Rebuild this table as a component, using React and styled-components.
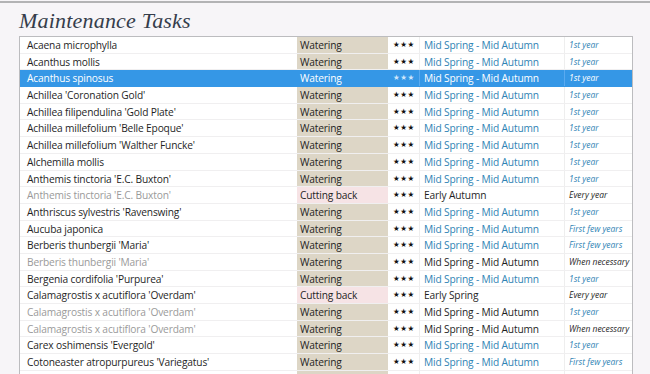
import styled, { createGlobalStyle } from "styled-components";

const GlobalStyle = createGlobalStyle`
  html, body {
    margin: 0;
    padding: 0;
    background: #f7f5f8;
    overflow: hidden;
  }
`;

const rows = [
  { name: "Acaena microphylla", task: "Watering", season: "Mid Spring - Mid Autumn", freq: "1st year", blue: true },
  { name: "Acanthus mollis", task: "Watering", season: "Mid Spring - Mid Autumn", freq: "1st year", blue: true },
  { name: "Acanthus spinosus", task: "Watering", season: "Mid Spring - Mid Autumn", freq: "1st year", blue: true, selected: true },
  { name: "Achillea 'Coronation Gold'", task: "Watering", season: "Mid Spring - Mid Autumn", freq: "1st year", blue: true },
  { name: "Achillea filipendulina 'Gold Plate'", task: "Watering", season: "Mid Spring - Mid Autumn", freq: "1st year", blue: true },
  { name: "Achillea millefolium 'Belle Epoque'", task: "Watering", season: "Mid Spring - Mid Autumn", freq: "1st year", blue: true },
  { name: "Achillea millefolium 'Walther Funcke'", task: "Watering", season: "Mid Spring - Mid Autumn", freq: "1st year", blue: true },
  { name: "Alchemilla mollis", task: "Watering", season: "Mid Spring - Mid Autumn", freq: "1st year", blue: true },
  { name: "Anthemis tinctoria 'E.C. Buxton'", task: "Watering", season: "Mid Spring - Mid Autumn", freq: "1st year", blue: true },
  { name: "Anthemis tinctoria 'E.C. Buxton'", task: "Cutting back", season: "Early Autumn", freq: "Every year", muted: true },
  { name: "Anthriscus sylvestris 'Ravenswing'", task: "Watering", season: "Mid Spring - Mid Autumn", freq: "1st year", blue: true },
  { name: "Aucuba japonica", task: "Watering", season: "Mid Spring - Mid Autumn", freq: "First few years", blue: true },
  { name: "Berberis thunbergii 'Maria'", task: "Watering", season: "Mid Spring - Mid Autumn", freq: "First few years", blue: true },
  { name: "Berberis thunbergii 'Maria'", task: "Watering", season: "Mid Spring - Mid Autumn", freq: "When necessary", muted: true },
  { name: "Bergenia cordifolia 'Purpurea'", task: "Watering", season: "Mid Spring - Mid Autumn", freq: "1st year", blue: true },
  { name: "Calamagrostis x acutiflora 'Overdam'", task: "Cutting back", season: "Early Spring", freq: "Every year" },
  { name: "Calamagrostis x acutiflora 'Overdam'", task: "Watering", season: "Mid Spring - Mid Autumn", freq: "1st year", blue: true, muted: true },
  { name: "Calamagrostis x acutiflora 'Overdam'", task: "Watering", season: "Mid Spring - Mid Autumn", freq: "When necessary", muted: true },
  { name: "Carex oshimensis 'Evergold'", task: "Watering", season: "Mid Spring - Mid Autumn", freq: "1st year", blue: true },
  { name: "Cotoneaster atropurpureus 'Variegatus'", task: "Watering", season: "Mid Spring - Mid Autumn", freq: "First few years", blue: true },
  { name: "", task: "", season: "", freq: "" },
];

export default function App() {
  return (
    <Page>
      <GlobalStyle />
      <Title>Maintenance Tasks</Title>
      <Table>
        {rows.map((r, i) => (
          <Row key={i} $selected={r.selected}>
            <NameCell $muted={r.muted} $selected={r.selected}>{r.name}</NameCell>
            <TaskCell $cut={r.task === "Cutting back"} $selected={r.selected}>{r.task}</TaskCell>
            <StarCell $selected={r.selected}>{r.name ? "★★★" : ""}</StarCell>
            <SeasonCell $blue={r.blue && !r.muted} $selected={r.selected}>{r.season}</SeasonCell>
            <FreqCell $blue={r.blue} $selected={r.selected}>{r.freq}</FreqCell>
          </Row>
        ))}
      </Table>
    </Page>
  );
}

const Page = styled.div`
  height: 374px;
  margin-top: 1px;
  border-top: 2px solid #b3b3b5;
  overflow: hidden;
`;

const Title = styled.h1`
  margin: 0 0 0 19px;
  padding-top: 3px;
  height: 30px;
  font-family: "Liberation Serif", serif;
  font-style: italic;
  font-weight: 400;
  font-size: 22px;
  line-height: 30px;
  color: #353d4b;
  letter-spacing: 0.2px;
`;

const Table = styled.div`
  margin-left: 19px;
  width: 612px;
  background: #ffffff;
  border: 1px solid #bcbcbf;
  border-bottom: none;
`;

const Row = styled.div`
  display: grid;
  grid-template-columns: 277px 91px 32px 145px 1fr;
  height: 16.7px;
  box-sizing: border-box;
  border-bottom: 1px solid ${(p) => (p.$selected ? "#3597e6" : "#f0eff0")};
  background: ${(p) => (p.$selected ? "#3597e6" : "#ffffff")};
  font-family: "Open Sans", "Noto Sans", sans-serif;
  font-size: 10.2px;
  letter-spacing: -0.15px;
  line-height: 16px;
  white-space: nowrap;
  overflow: hidden;
`;

const Cell = styled.div`
  overflow: hidden;
  color: ${(p) => (p.$selected ? "#ffffff" : "#1f1f1f")};
`;

const NameCell = styled(Cell)`
  padding-left: 7px;
  color: ${(p) => (p.$selected ? "#ffffff" : p.$muted ? "#9a9a9a" : "#1f1f1f")};
`;

const TaskCell = styled(Cell)`
  padding-left: 3px;
  background: ${(p) => (p.$selected ? "#3597e6" : p.$cut ? "#f6e3e5" : "#ddd6c6")};
`;

const StarCell = styled(Cell)`
  padding-left: 5px;
  font-family: "DejaVu Sans", sans-serif;
  font-size: 7.5px;
  letter-spacing: 0.5px;
  color: ${(p) => (p.$selected ? "#cfe6fb" : "#111111")};
  border-right: 1px solid ${(p) => (p.$selected ? "#5aaaf0" : "#eeeeee")};
`;

const SeasonCell = styled(Cell)`
  padding-left: 4px;
  color: ${(p) => (p.$selected ? "#ffffff" : p.$blue ? "#2f83b4" : "#1f1f1f")};
  border-right: 1px solid ${(p) => (p.$selected ? "#5aaaf0" : "#eeeeee")};
`;

const FreqCell = styled(Cell)`
  padding-left: 4px;
  font-size: 8.5px;
  letter-spacing: 0;
  font-style: italic;
  color: ${(p) => (p.$selected ? "#ffffff" : p.$blue ? "#2f83b4" : "#1f1f1f")};
`;
